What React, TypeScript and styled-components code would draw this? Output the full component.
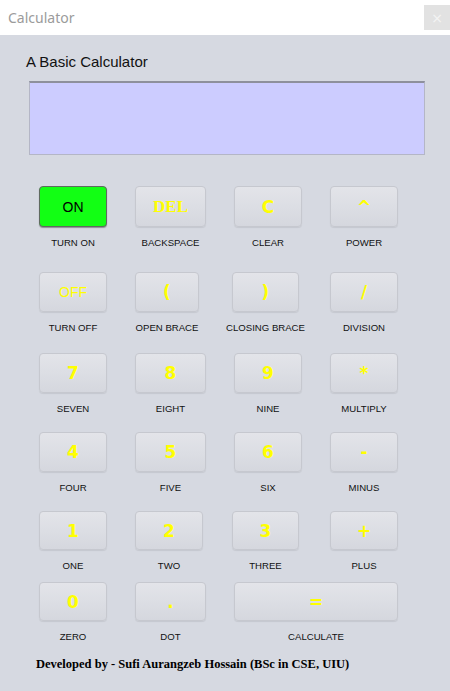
import React from "react";
import styled, { createGlobalStyle } from "styled-components";

const GlobalStyle = createGlobalStyle`
  html, body {
    margin: 0;
    padding: 0;
    background: #d6d9e1;
  }
`;

type KeyDef = {
  face: string;
  label: string;
  w?: number;
  shift?: number;
  kind?: "on" | "off" | "serif";
};

const rows: { top: number; h: number; keys: KeyDef[] }[] = [
  {
    top: 31,
    h: 41,
    keys: [
      { face: "ON", label: "TURN ON", kind: "on" },
      { face: "DEL", label: "BACKSPACE", w: 71, kind: "serif" },
      { face: "C", label: "CLEAR", shift: 2 },
      { face: "^", label: "POWER" },
    ],
  },
  {
    top: 23,
    h: 40,
    keys: [
      { face: "OFF", label: "TURN OFF", kind: "off" },
      { face: "(", label: "OPEN BRACE", w: 64 },
      { face: ")", label: "CLOSING BRACE", w: 67 },
      { face: "/", label: "DIVISION" },
    ],
  },
  {
    top: 19,
    h: 40,
    keys: [
      { face: "7", label: "SEVEN" },
      { face: "8", label: "EIGHT", w: 71 },
      { face: "9", label: "NINE", shift: 2 },
      { face: "*", label: "MULTIPLY" },
    ],
  },
  {
    top: 17,
    h: 40,
    keys: [
      { face: "4", label: "FOUR" },
      { face: "5", label: "FIVE", w: 71 },
      { face: "6", label: "SIX", shift: 2 },
      { face: "-", label: "MINUS" },
    ],
  },
  {
    top: 17,
    h: 39,
    keys: [
      { face: "1", label: "ONE" },
      { face: "2", label: "TWO" },
      { face: "3", label: "THREE", w: 67 },
      { face: "+", label: "PLUS" },
    ],
  },
];

const App: React.FC = () => {
  return (
    <Window>
      <GlobalStyle />
      <TitleBar>
        <Title>Calculator</Title>
        <CloseButton>×</CloseButton>
      </TitleBar>
      <Body>
        <Heading>A Basic Calculator</Heading>
        <Display />
        {rows.map((row, i) => (
          <KeyRow key={i} $top={row.top}>
            {row.keys.map((k) => (
              <KeyCell key={k.label} $w={k.w ?? 68} $shift={k.shift ?? 0}>
                <KeyButton $kind={k.kind} $h={row.h}>
                  {k.face}
                </KeyButton>
                <KeyLabel>{k.label}</KeyLabel>
              </KeyCell>
            ))}
          </KeyRow>
        ))}
        <KeyRow $top={10}>
          <KeyCell $w={68} $shift={0}>
            <KeyButton $h={39}>0</KeyButton>
            <KeyLabel>ZERO</KeyLabel>
          </KeyCell>
          <KeyCell $w={71} $shift={0}>
            <KeyButton $h={39}>.</KeyButton>
            <KeyLabel>DOT</KeyLabel>
          </KeyCell>
          <WideCell>
            <KeyButton $h={39}>=</KeyButton>
            <KeyLabel>CALCULATE</KeyLabel>
          </WideCell>
        </KeyRow>
        <Footer>Developed by - Sufi Aurangzeb Hossain (BSc in CSE, UIU)</Footer>
      </Body>
    </Window>
  );
};

const Window = styled.div`
  width: 450px;
  height: 691px;
  background: #d6d9e1;
  overflow: hidden;
`;

const TitleBar = styled.div`
  height: 35px;
  background: #ffffff;
  display: flex;
  align-items: center;
  justify-content: space-between;
  padding-left: 8px;
  box-sizing: border-box;
`;

const Title = styled.span`
  font-family: "Noto Sans", "Open Sans", sans-serif;
  font-size: 14px;
  color: #9b9b9b;
`;

const CloseButton = styled.div`
  width: 26px;
  height: 25px;
  background: #e2e2e2;
  color: #f4f4f4;
  display: flex;
  align-items: center;
  justify-content: center;
  font-family: "DejaVu Sans", sans-serif;
  font-size: 14px;
`;

const Body = styled.div`
  padding: 18px 0 0 0;
`;

const Heading = styled.div`
  margin-left: 26px;
  font-family: "Liberation Sans", Arial, sans-serif;
  font-size: 15px;
  line-height: 18px;
  color: #111;
`;

const Display = styled.div`
  margin: 10px 0 0 29px;
  width: 396px;
  height: 74px;
  box-sizing: border-box;
  background: #ccccff;
  border: 1px solid #b4b6c6;
  border-top: 2px solid #8e909c;
`;

const KeyRow = styled.div<{ $top: number }>`
  margin-top: ${({ $top }) => $top}px;
  padding-left: 39px;
  display: grid;
  grid-template-columns: 96px 97px 98px 1fr;
  align-items: start;
`;

const KeyCell = styled.div<{ $w: number; $shift: number }>`
  width: ${({ $w }) => $w}px;
  margin-left: ${({ $shift }) => $shift}px;
  display: flex;
  flex-direction: column;
  align-items: center;
`;

const WideCell = styled.div`
  grid-column: 3 / span 2;
  margin-left: 2px;
  width: 164px;
  display: flex;
  flex-direction: column;
  align-items: center;
`;

const KeyButton = styled.div<{ $kind?: "on" | "off" | "serif"; $h: number }>`
  width: 100%;
  height: ${({ $h }) => $h}px;
  box-sizing: border-box;
  border-radius: 4px;
  display: flex;
  align-items: center;
  justify-content: center;
  border: 1px solid ${({ $kind }) => ($kind === "on" ? "#5f6a5f" : "#c6c8cf")};
  background: ${({ $kind }) =>
    $kind === "on"
      ? "#12ff14"
      : "linear-gradient(to bottom, #e3e4e9 0%, #dcdee4 50%, #d5d7de 100%)"};
  box-shadow: ${({ $kind }) =>
    $kind === "on" ? "0 1px 1px rgba(0,0,0,0.35)" : "0 1px 1px rgba(0,0,0,0.08)"};
  color: ${({ $kind }) => ($kind === "on" ? "#000" : "#ffff00")};
  font-family: ${({ $kind }) =>
    $kind === "serif"
      ? '"Liberation Serif", "Times New Roman", serif'
      : $kind === "on" || $kind === "off"
      ? '"Liberation Sans", Arial, sans-serif'
      : '"DejaVu Sans", Verdana, sans-serif'};
  font-weight: ${({ $kind }) => ($kind === "on" || $kind === "off" ? 400 : 700)};
  font-size: ${({ $kind }) =>
    $kind === "serif" ? "17px" : $kind === "on" || $kind === "off" ? "14px" : "17px"};
`;

const KeyLabel = styled.div`
  margin-top: 10px;
  white-space: nowrap;
  font-family: "Liberation Sans", Arial, sans-serif;
  font-size: 9.6px;
  line-height: 12px;
  color: #111;
`;

const Footer = styled.div`
  margin: 14px 0 0 36px;
  font-family: "Liberation Serif", "Times New Roman", serif;
  font-weight: 700;
  font-size: 12.5px;
  line-height: 14px;
  color: #000;
`;

export default App;
